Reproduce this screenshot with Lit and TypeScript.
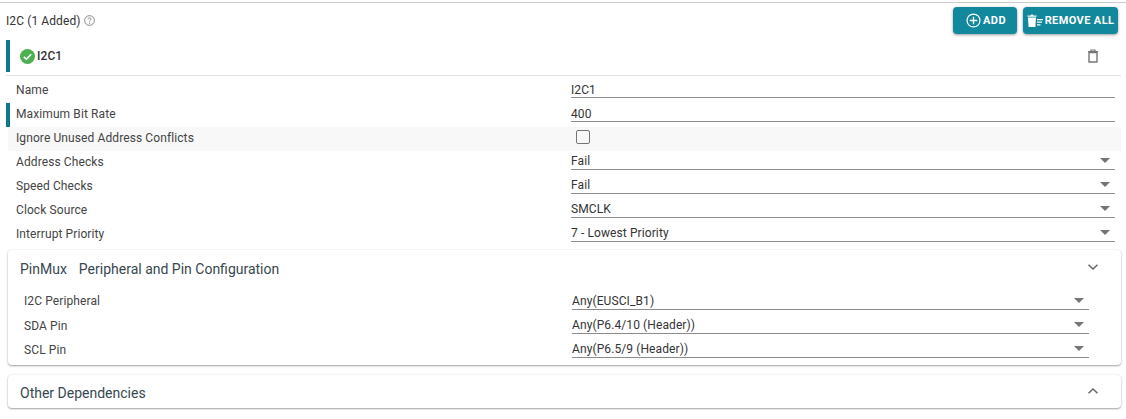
import { LitElement, html, css, svg } from 'lit';
import { customElement } from 'lit/decorators.js';

const caret = html`<svg class="caret" width="10" height="5" viewBox="0 0 10 5"><path d="M0 0h10L5 5z" fill="#757575"/></svg>`;

const chevron = (up: boolean) => html`<svg class="chevron" width="12" height="8" viewBox="0 0 12 8">
	<path d="${up ? 'M1.5 6.2 6 2l4.5 4.2' : 'M1.5 1.8 6 6l4.5-4.2'}" fill="none" stroke="#666" stroke-width="1.5"/>
</svg>`;

const trashFilled = svg`<path d="M1 3.6h8l-.6 9.4H1.6z" fill="#fff"/><path d="M.5 1.4h3L4 .4h2l.5 1h3v1.4h-9z" fill="#fff"/><path d="M10 5h6v1.2h-6zM10 7.6h5v1.2h-5zM10 10.2h3.5v1.2H10z" fill="#fff"/>`;

const mainRows = [
	{ label: 'Address Checks', value: 'Fail' },
	{ label: 'Speed Checks', value: 'Fail' },
	{ label: 'Clock Source', value: 'SMCLK' },
	{ label: 'Interrupt Priority', value: '7 - Lowest Priority' }
];

const pinRows = [
	{ label: 'I2C Peripheral', value: 'Any(EUSCI_B1)' },
	{ label: 'SDA Pin', value: 'Any(P6.4/10 (Header))' },
	{ label: 'SCL Pin', value: 'Any(P6.5/9 (Header))' }
];

@customElement('app-root')
export class AppRoot extends LitElement {
	static styles = css`
		:host {
			display: block;
			width: 1126px;
			height: 419px;
			overflow: hidden;
			background: #fff;
			font-family: Roboto, 'Liberation Sans', sans-serif;
			font-size: 12px;
			color: #333;
		}

		.top {
			height: 28px;
			margin-top: 2px;
			border-top: 1px solid #ccc;
			padding: 4px 8px 0 6px;
			display: flex;
			align-items: flex-start;
			justify-content: space-between;
		}

		.title {
			display: flex;
			align-items: center;
			gap: 3px;
			height: 27px;
			font-size: 12px;
			letter-spacing: 0.1px;
			color: #333;
		}

		.actions {
			display: flex;
			gap: 6px;
		}

		.btn {
			height: 27px;
			box-sizing: border-box;
			border: none;
			border-radius: 4px;
			background: #11889b;
			color: #fff;
			font: 700 11px Roboto, 'Liberation Sans', sans-serif;
			letter-spacing: 0.4px;
			display: flex;
			align-items: center;
			justify-content: center;
			padding: 0;
			box-shadow: 0 1px 3px rgba(0, 0, 0, 0.4);
		}

		.btn.add {
			width: 64px;
			gap: 2px;
			padding-left: 2px;
		}

		.btn.remove {
			width: 95px;
			gap: 2px;
		}

		.instance {
			height: 32px;
			margin: 5px 5px 0 6px;
			border-left: 4px solid #11788a;
			display: flex;
			align-items: center;
			padding: 0 22px 0 10px;
			font-size: 12px;
			font-weight: 500;
			letter-spacing: 0.1px;
			gap: 2px;
			color: #333;
		}

		.instance .trash {
			margin-left: auto;
		}

		.rule {
			height: 1px;
			margin: 3px 5px 0 6px;
			background: #e0e0e0;
		}

		.rows {
			padding-top: 3px;
		}

		.row {
			height: 24px;
			margin: 0 5px 0 6px;
			padding: 0 6px 0 10px;
			display: grid;
			grid-template-columns: 555px 544px;
			align-items: center;
			box-sizing: border-box;
			position: relative;
		}

		.row.marked::before {
			content: '';
			position: absolute;
			left: 0;
			top: 0;
			width: 4px;
			height: 24px;
			background: #11788a;
		}

		.row.shaded {
			background: #f8f8f8;
			margin-left: 8px;
			padding-left: 8px;
		}

		.label {
			color: #444;
			letter-spacing: 0.1px;
			line-height: 14px;
			margin-top: -2px;
		}

		.field {
			align-self: start;
			height: 14px;
			margin-top: 4px;
			border-bottom: 1px solid #8c8c8c;
			line-height: 14px;
			letter-spacing: 0.1px;
			color: #333;
		}

		.field.select {
			height: 15px;
			margin-top: 3px;
			display: flex;
			align-items: flex-start;
			justify-content: space-between;
		}

		.field .caret {
			margin: 4px 5px 0 0;
		}

		.check {
			box-sizing: border-box;
			width: 14px;
			height: 14px;
			margin: -4px 0 0 5px;
			border: 1.5px solid #757575;
			border-radius: 2px;
		}

		.card {
			margin: 0 5px 0 8px;
			background: #fff;
			border-radius: 4px;
			box-shadow: 0 1px 2px rgba(0, 0, 0, 0.35), 0 0 2px rgba(0, 0, 0, 0.1);
		}

		.card.pinmux {
			margin-top: 3px;
			height: 115px;
		}

		.card.other {
			margin-top: 10px;
			height: 33px;
		}

		.card-head {
			padding: 0 22px 0 12px;
			display: flex;
			align-items: center;
			justify-content: space-between;
			font-size: 14px;
			line-height: 16px;
			color: #37474f;
		}

		.pinmux .card-head {
			height: 38px;
		}

		.other .card-head {
			height: 33px;
			padding-top: 3px;
			box-sizing: border-box;
		}

		.card-head .sub {
			margin-left: 12px;
		}

		.card-head .chevron {
			margin-top: -4px;
		}

		.pin-rows {
			padding-top: 3px;
		}

		.pin-row {
			height: 24px;
			padding: 0 32px 0 16px;
			display: grid;
			grid-template-columns: 548px 517px;
			align-items: center;
		}

		.pin-row:first-child .label {
			margin-top: -4px;
		}
	`;

	render() {
		return html`
			<div class="top">
				<div class="title">
					I2C (1 Added)
					<svg width="11" height="11" viewBox="0 0 10 10">
						<circle cx="5" cy="5" r="4.4" fill="none" stroke="#777" stroke-width="0.8"/>
						<path d="M3.6 4c0-1.8 2.8-1.8 2.8-.2 0 1-1.4 1-1.4 2.2" fill="none" stroke="#777" stroke-width="0.8"/>
						<circle cx="5" cy="7.4" r=".5" fill="#777"/>
					</svg>
				</div>
				<div class="actions">
					<button class="btn add">
						<svg width="15" height="15" viewBox="0 0 16 16">
							<circle cx="8" cy="8" r="6.9" fill="none" stroke="#fff" stroke-width="1.3"/>
							<path d="M8 4v8M4 8h8" stroke="#fff" stroke-width="1.4"/>
						</svg>
						ADD
					</button>
					<button class="btn remove">
						<svg width="16" height="13" viewBox="0 0 16 13">${trashFilled}</svg>
						REMOVE ALL
					</button>
				</div>
			</div>

			<div class="instance">
				<svg width="15" height="15" viewBox="0 0 15 15">
					<circle cx="7.5" cy="7.5" r="7.5" fill="#4caf50"/>
					<path d="M3.8 7.8 6.3 10.2 11.2 5.2" fill="none" stroke="#fff" stroke-width="1.6"/>
				</svg>
				I2C1
				<svg class="trash" width="12" height="14" viewBox="0 0 12 14">
					<path d="M1 2.5h10M4 2.5V1h4v1.5" fill="none" stroke="#757575" stroke-width="1.2"/>
					<path d="M2 3.5h8v9.5H2z" fill="none" stroke="#757575" stroke-width="1.4"/>
				</svg>
			</div>
			<div class="rule"></div>

			<div class="rows">
				<div class="row">
					<div class="label">Name</div>
					<div class="field">I2C1</div>
				</div>
				<div class="row marked">
					<div class="label">Maximum Bit Rate</div>
					<div class="field">400</div>
				</div>
				<div class="row shaded">
					<div class="label">Ignore Unused Address Conflicts</div>
					<div><div class="check"></div></div>
				</div>
				${mainRows.map(
					(r) => html`
						<div class="row">
							<div class="label">${r.label}</div>
							<div class="field select">${r.value}${caret}</div>
						</div>
					`
				)}
			</div>

			<div class="card pinmux">
				<div class="card-head">
					<div>PinMux<span class="sub">Peripheral and Pin Configuration</span></div>
					${chevron(false)}
				</div>
				<div class="pin-rows">
					${pinRows.map(
						(r) => html`
							<div class="pin-row">
								<div class="label">${r.label}</div>
								<div class="field select">${r.value}${caret}</div>
							</div>
						`
					)}
				</div>
			</div>

			<div class="card other">
				<div class="card-head">
					<div>Other Dependencies</div>
					${chevron(true)}
				</div>
			</div>
		`;
	}
}
